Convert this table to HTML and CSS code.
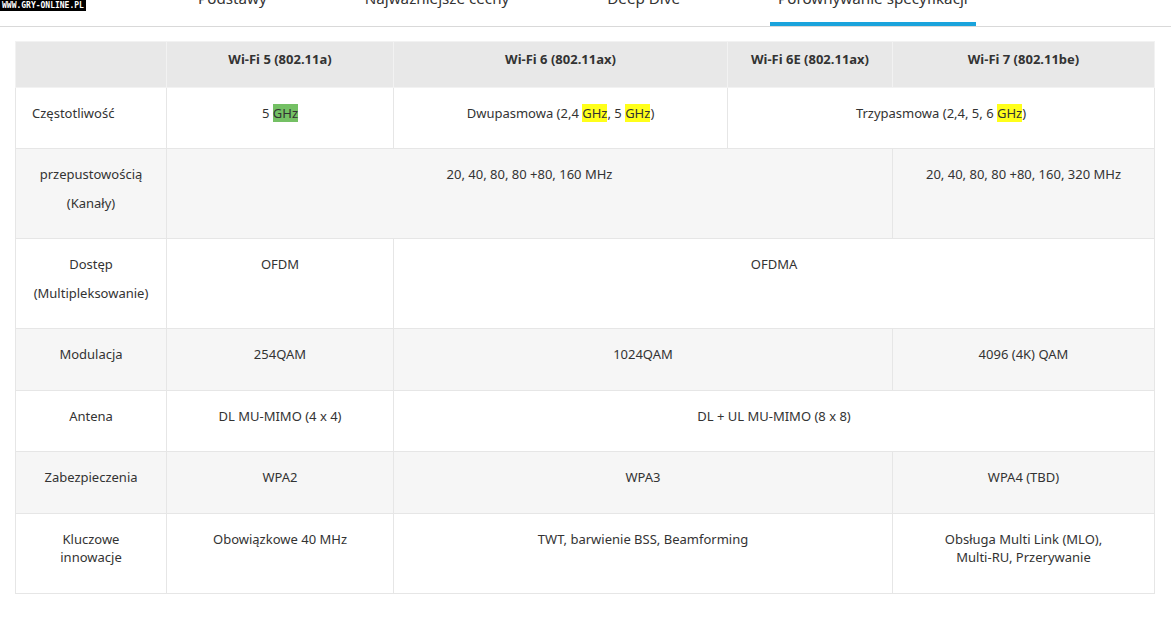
FILE: index.html
```html
<!DOCTYPE html>
<html lang="pl">
<head>
    <meta charset="UTF-8">
    <meta name="viewport" content="width=device-width, initial-scale=1.0">
    <title>Porównywanie specyfikacji Wi-Fi</title>
    <link rel="stylesheet" href="styles.css">
</head>
<body>

<div class="watermark">WWW.GRY-ONLINE.PL</div>

<nav class="tabs">
    <a href="#">Podstawy</a>
    <a href="#">Najważniejsze cechy</a>
    <a href="#">Deep Dive</a>
    <a href="#" class="active">Porównywanie specyfikacji</a>
</nav>

<div class="spec-wrap">
    <table class="spec-table">
        <thead>
            <tr>
                <th class="c-label"></th>
                <th class="c-wifi5">Wi-Fi 5 (802.11a)</th>
                <th class="c-wifi6">Wi-Fi 6 (802.11ax)</th>
                <th class="c-wifi6e">Wi-Fi 6E (802.11ax)</th>
                <th>Wi-Fi 7 (802.11be)</th>
            </tr>
        </thead>
        <tbody>
            <tr>
                <td class="label"><p>Częstotliwość</p></td>
                <td><p>5 <mark class="green">GHz</mark></p></td>
                <td><p>Dwupasmowa (2,4 <mark>GHz</mark>, 5 <mark>GHz</mark>)</p></td>
                <td colspan="2"><p>Trzypasmowa (2,4, 5, 6 <mark>GHz</mark>)</p></td>
            </tr>
            <tr>
                <td><p>przepustowością</p><p>(Kanały)</p></td>
                <td colspan="3"><p>20, 40, 80, 80 +80, 160 MHz</p></td>
                <td><p>20, 40, 80, 80 +80, 160, 320 MHz</p></td>
            </tr>
            <tr>
                <td><p>Dostęp</p><p>(Multipleksowanie)</p></td>
                <td><p>OFDM</p></td>
                <td colspan="3"><p>OFDMA</p></td>
            </tr>
            <tr>
                <td><p>Modulacja</p></td>
                <td><p>254QAM</p></td>
                <td colspan="2"><p>1024QAM</p></td>
                <td><p>4096 (4K) QAM</p></td>
            </tr>
            <tr>
                <td><p>Antena</p></td>
                <td><p>DL MU-MIMO (4 x 4)</p></td>
                <td colspan="3"><p>DL + UL MU-MIMO (8 x 8)</p></td>
            </tr>
            <tr>
                <td><p>Zabezpieczenia</p></td>
                <td><p>WPA2</p></td>
                <td colspan="2"><p>WPA3</p></td>
                <td><p>WPA4 (TBD)</p></td>
            </tr>
            <tr class="tall">
                <td><p>Kluczowe<br>innowacje</p></td>
                <td><p>Obowiązkowe 40 MHz</p></td>
                <td colspan="2"><p>TWT, barwienie BSS, Beamforming</p></td>
                <td><p>Obsługa Multi Link (MLO),<br>Multi-RU, Przerywanie</p></td>
            </tr>
        </tbody>
    </table>
</div>

</body>
</html>
```

FILE: styles.css
```css
body {
    font-family: "Noto Sans", "Open Sans", Arial, sans-serif;
    background-color: #fff;
    color: #333;
    margin: 0;
    padding: 0;
}
.watermark {
    position: absolute;
    top: 0;
    left: 0;
    background: #000;
    color: #fff;
    font-family: "DejaVu Sans Mono", monospace;
    font-size: 8px;
    font-weight: bold;
    line-height: 11px;
    padding: 0 2px;
}
.tabs {
    display: flex;
    gap: 82px;
    margin-top: -12px;
    padding-left: 190px;
    border-bottom: 1px solid #d9d9d9;
}
.tabs a {
    color: #333;
    text-decoration: none;
    font-size: 15.2px;
    line-height: 20px;
    padding: 0 8px 14px;
    border-bottom: 4px solid transparent;
}
.tabs a.active {
    border-bottom-color: #1aa3dc;
}
.spec-wrap {
    margin: 14px 0 0 15px;
}
.spec-table {
    width: 1140px;
    table-layout: fixed;
    border-collapse: collapse;
    font-size: 13px;
}
.c-label { width: 130px; }
.c-wifi5 { width: 206px; }
.c-wifi6 { width: 313px; }
.c-wifi6e { width: 144px; }
.spec-table th {
    background: #e8e8e8;
    border: 1px solid #f2f2f2;
    font-weight: bold;
    color: #333;
    text-align: center;
    vertical-align: top;
    line-height: 18px;
    padding: 8px 10px 19px;
}
.spec-table td {
    border: 1px solid #e6e6e6;
    text-align: center;
    vertical-align: top;
    padding: 16px 10px 15px;
    line-height: 18px;
}
.spec-table td.label {
    text-align: left;
    padding-left: 16px;
}
.spec-table tbody tr:nth-child(even) td {
    background: #f6f6f6;
}
.spec-table tbody tr:nth-child(4) td,
.spec-table tbody tr:nth-child(6) td,
.spec-table tbody tr.tall td {
    padding-bottom: 16px;
}
.spec-table p {
    margin: 0 0 11px;
}
mark {
    background: #ffff1a;
    color: #333;
}
mark.green {
    background: #74c064;
}
```
